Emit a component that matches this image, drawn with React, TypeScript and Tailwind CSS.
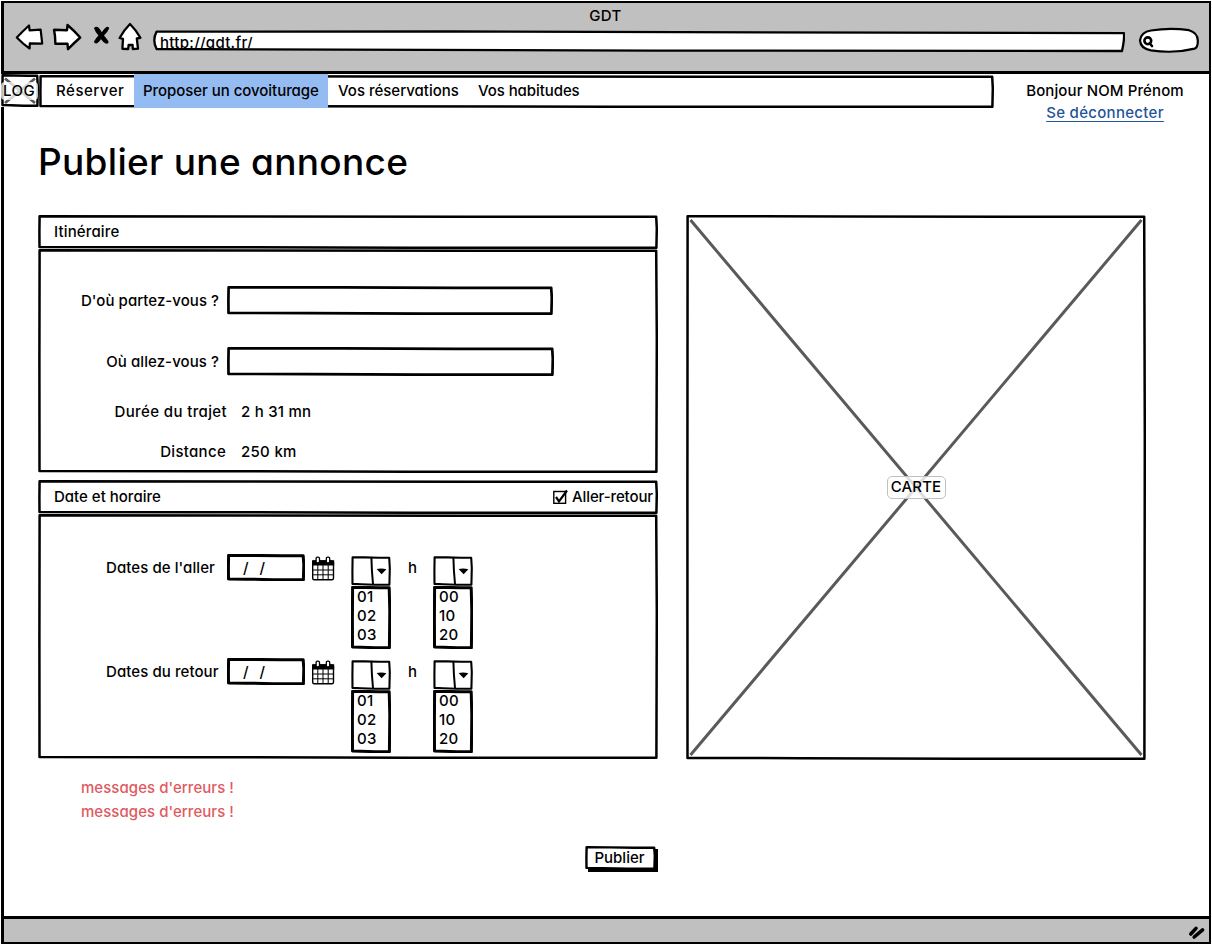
import React from "react";

const INK = "#000";

/* Hand-drawn rectangle outline, laid over the edge of its parent. */
function Outline({ w, h, stroke = 2.5 }: { w: number; h: number; stroke?: number }) {
  const d = [
    `M1.6 1.3`,
    `L${w * 0.35} 1.4`,
    `L${w * 0.7} 1.8`,
    `L${w - 1.8} 1.8`,
    `L${w - 1.2} ${h * 0.4}`,
    `L${w - 1.6} ${h - 1.3}`,
    `L${w * 0.6} ${h - 1.3}`,
    `L${w * 0.25} ${h - 1.8}`,
    `L1.5 ${h - 2.1}`,
    `L1.4 ${h * 0.5}`,
    "Z",
  ].join(" ");
  return (
    <svg className="pointer-events-none absolute left-0 top-0" width={w} height={h} viewBox={`0 0 ${w} ${h}`} fill="none" stroke={INK} strokeWidth={stroke} strokeLinejoin="round">
      <path d={d} />
    </svg>
  );
}

function BackArrow() {
  return (
    <svg width="29" height="28" viewBox="0 0 29 28" fill="#fff" stroke={INK} strokeWidth="2.2" strokeLinejoin="round">
      <path d="M1.8 14.5 Q8 8 14 2.5 L14.6 7.4 L25.6 6.6 Q26.4 13 27.2 20.6 L14.8 20.4 L14.6 25.5 Q8 21 1.8 14.5Z" />
    </svg>
  );
}

function ForwardArrow() {
  return (
    <svg width="30" height="28" viewBox="0 0 30 28" fill="#fff" stroke={INK} strokeWidth="2.4" strokeLinejoin="round">
      <path d="M2 6.8 L15 7.2 L15.5 2 Q22 7.5 28.2 14.5 Q22 20 16 26.2 L15.5 20.8 L3.4 20.8 Q3.4 13 2 6.8Z" />
    </svg>
  );
}

function StopCross() {
  return (
    <svg width="19" height="21" viewBox="0 0 19 21" fill={INK}>
      <path d="M2 3.2 Q3.6 0.8 6.4 2.4 Q8.4 4.4 9.8 7.2 Q12 3.6 14.4 2 Q17 1.2 17.2 3.6 Q15.4 7.4 12 10.6 Q14.4 13.4 16.6 16.6 Q16.8 19 14 18.8 Q11.2 17.4 9 14.2 Q6.8 17.4 4.6 18.6 Q2 18.8 2 16.6 Q3.6 13.4 6.4 10.6 Q3.4 7.2 2 3.2Z" />
    </svg>
  );
}

function Home() {
  return (
    <svg width="24" height="29" viewBox="0 0 24 29" fill="#fff" stroke={INK} strokeWidth="2.3" strokeLinejoin="round">
      <path d="M12 2 Q18 8 22.4 15.8 L18.8 16.5 L20 26.6 L14.8 27 L14.6 23 L10.6 23 L10.2 27 L4.4 26.8 L5 16.8 L1.6 16 Q6 8 12 2Z" />
    </svg>
  );
}

function Calendar() {
  return (
    <svg width="24" height="26" viewBox="0 0 24 26" fill="none" stroke={INK}>
      <rect x="1.7" y="5" width="20.8" height="18.8" rx="1.5" fill="#fff" strokeWidth="1.4" />
      <rect x="1" y="4.3" width="22.2" height="5.2" fill={INK} stroke="none" />
      <path d="M6.8 9V24M12 9V24M17.2 9V24M2 14H22.5M2 18.8H22.5" strokeWidth="1" />
      <rect x="5.1" y="1.2" width="3.4" height="5.6" rx="1.4" fill="#fff" strokeWidth="1.3" />
      <rect x="15.3" y="1.2" width="3.4" height="5.6" rx="1.4" fill="#fff" strokeWidth="1.3" />
    </svg>
  );
}

function AddressBar() {
  return (
    <div className="relative h-[23px] w-[972px] overflow-hidden">
      <svg className="absolute inset-0" width="972" height="23" viewBox="0 0 972 23" fill="#fff" stroke={INK} strokeWidth="2.3" strokeLinejoin="round">
        <path d="M3.6 1.6 L300 1.5 L971 3.2 Q971.5 10 969 21 L500 20.6 L3.6 19 Q-1 10 3.6 1.6Z" />
      </svg>
      <div className="relative h-[18px] overflow-hidden pl-[7px] text-[15px] leading-[25px] tracking-[0.02em]">http://gdt.fr/</div>
    </div>
  );
}

function SearchField() {
  return (
    <svg width="61" height="26" viewBox="0 0 61 26" fill="#fff" stroke={INK} strokeWidth="2.2">
      <path d="M13 3.5 Q32 0.4 51 3.2 Q59.6 5.6 59.8 13.5 Q60 20.6 56.6 21.6 Q36 26.8 13 23.4 Q2.4 21.4 2 13.4 Q3 5 13 3.5Z" />
      <circle cx="9.8" cy="13.8" r="3.4" strokeWidth="2.6" />
      <path d="M11.8 16.5 L14 19" strokeWidth="2.6" strokeLinecap="round" />
    </svg>
  );
}

function Combo({ options }: { options: string[] }) {
  return (
    <div className="w-10">
      <div className="relative flex h-[30px]">
        <Outline w={40} h={30} stroke={2.1} />
        <svg width="40" height="30" viewBox="0 0 40 30">
          <path d="M20.4 1.5 Q20.6 14 22 28" fill="none" stroke={INK} strokeWidth="2" />
          <path d="M25.6 13 Q30.5 12 35.4 13.2 L30.6 18.2Z" fill={INK} />
        </svg>
      </div>
      <ul className="relative h-[63px] pl-[6px] pt-px">
        <Outline w={40} h={63} stroke={3} />
        {options.map((o) => (
          <li key={o} className="text-[15px] leading-[19px] tracking-[0.02em]">{o}</li>
        ))}
      </ul>
    </div>
  );
}

function DateRow({ label }: { label: string }) {
  return (
    <div className="flex h-[104px] items-start">
      <div className="w-[121px] whitespace-nowrap text-[15px] leading-[26px] tracking-[0.005em]">{label}</div>
      <div className="relative -mt-px h-[27px] w-[78px] whitespace-pre pl-[16px] text-[15px] leading-[28px] [word-spacing:1.5px]">
        <Outline w={78} h={27} stroke={3} />
        /  /
      </div>
      <div className="ml-[6px] mt-px">
        <Calendar />
      </div>
      <div className="ml-4 mt-px">
        <Combo options={["01", "02", "03"]} />
      </div>
      <div className="w-[42px] pl-[17px] text-[15px] leading-[26px]">h</div>
      <div className="mt-px">
        <Combo options={["00", "10", "20"]} />
      </div>
    </div>
  );
}

function TextField({ w }: { w: 326 | 327 }) {
  return (
    <div className="relative ml-[8px] h-[29px]">
      <input className={w === 326 ? "block h-[29px] w-[326px] px-2 outline-none" : "block h-[29px] w-[327px] px-2 outline-none"} />
      <Outline w={w} h={29} stroke={2.7} />
    </div>
  );
}

export default function App() {
  return (
    <div className="h-[945px] w-[1212px] overflow-hidden bg-white pl-px pt-px text-black font-[450] [font-family:Inter,'Noto_Sans',sans-serif] [font-feature-settings:'cv11']">
      <div className="flex h-[943px] w-[1210px] flex-col border-y-[2px] border-l-[3px] border-r-[2px] border-black">
        <header className="h-[71px] shrink-0 border-b-[3px] border-black bg-[#c0c0c0]">
          <div className="h-[20px] pt-px pr-[2px] text-center text-[15px] leading-[23px] tracking-[0.03em]">GDT</div>
          <div className="flex h-[40px] items-start pl-[11px]">
            <BackArrow />
            <div className="ml-[8px]">
              <ForwardArrow />
            </div>
            <div className="ml-[10px] mt-[2px]">
              <StopCross />
            </div>
            <div className="ml-[7px] -mt-px">
              <Home />
            </div>
            <div className="ml-[11px] mt-[7px]">
              <AddressBar />
            </div>
            <div className="ml-[13px] mt-[4px]">
              <SearchField />
            </div>
          </div>
        </header>

        <div className="flex h-[60px] shrink-0 items-start">
          <div className="relative -ml-[3px] flex h-[33px] w-[38px] items-center justify-center bg-white">
            <Outline w={38} h={33} />
            <svg className="absolute inset-0" width="38" height="33" viewBox="0 0 38 33" stroke="#5a5a5a" strokeWidth="2.8">
              <path d="M4 4.5 L34 29 M34 4.5 L4 29" />
            </svg>
            <span className="relative -ml-[2px] w-[37px] shrink-0 rounded bg-white/75 text-center text-[15px] leading-[18px] tracking-[0.03em]">LOG</span>
          </div>
          <nav className="relative mt-px flex h-[33px] w-[955px] items-start pl-[3px] pt-[2px] text-[15px] leading-[28px]">
            <Outline w={955} h={33} />
            <a className="w-[92px] pl-[14px] tracking-[0.035em]">Réserver</a>
            <a className="relative -mt-[3px] h-[34px] w-[194px] whitespace-nowrap bg-[#94bbf2] pl-[9px] pt-[3px] tracking-[-0.003em]">Proposer un covoiturage</a>
            <a className="w-[141px] whitespace-nowrap pl-[10px]">Vos réservations</a>
            <a className="whitespace-nowrap pl-[9px] tracking-[-0.005em]">Vos habitudes</a>
          </nav>
          <div className="ml-[22px] flex w-[178px] flex-col items-center whitespace-nowrap pt-[6px] text-[15px] leading-[22px] tracking-[0.008em]">
            <span>Bonjour NOM Prénom</span>
            <a className="tracking-[0.02em] text-[#1f5599] underline underline-offset-[3px]">Se déconnecter</a>
          </div>
        </div>

        <main className="flex flex-1 flex-col pl-[34px]">
          <h1 className="h-[81px] whitespace-nowrap pt-[4px] text-[37px] font-medium leading-[48px] tracking-[0.008em]">Publier une annonce</h1>
          <div className="flex items-start">
            <div className="w-[620px]">
              <div className="relative h-[34px] pl-4 text-[15px] leading-[33px] tracking-[0.01em]">
                <Outline w={620} h={34} />
                Itinéraire
              </div>
              <section className="relative h-[224px] pt-[37px] text-[15px]">
                <Outline w={620} h={224} />
                <div className="flex h-[61px] items-start">
                  <label className="w-[181px] whitespace-nowrap text-right leading-[29px] tracking-[0.003em]">D'où partez-vous ?</label>
                  <TextField w={326} />
                </div>
                <div className="flex h-[49px] items-start">
                  <label className="w-[181px] whitespace-nowrap text-right leading-[29px] tracking-[0.005em]">Où allez-vous ?</label>
                  <TextField w={327} />
                </div>
                <div className="flex h-10 items-start leading-[32px] tracking-[0.025em]">
                  <div className="w-[189px] whitespace-nowrap text-right">Durée du trajet</div>
                  <div className="ml-[14px] tracking-[0.015em]">2 h 31 mn</div>
                </div>
                <div className="flex items-start leading-[32px] tracking-[0.02em]">
                  <div className="w-[188px] text-right">Distance</div>
                  <div className="ml-[15px]">250 km</div>
                </div>
              </section>
              <div className="relative mt-[7px] flex h-[34px] items-start pl-4 pr-[5px] text-[15px] leading-[34px]">
                <Outline w={620} h={34} />
                <span>Date et horaire</span>
                <label className="ml-auto flex items-center">
                  <svg width="17" height="16" viewBox="0 0 17 16" fill="none" stroke={INK}>
                    <rect x="2.8" y="2.5" width="11.8" height="11.8" strokeWidth="1.4" />
                    <path d="M5 8 L8 12.3 L16 1.5" strokeWidth="2.2" />
                  </svg>
                  <span className="ml-1 tracking-[-0.008em]">Aller-retour</span>
                </label>
              </div>
              <section className="relative h-[245px] pl-[68px] pt-[41px]">
                <Outline w={620} h={245} />
                <DateRow label="Dates de l'aller" />
                <DateRow label="Dates du retour" />
              </section>
            </div>
            <div className="relative ml-[28px] flex h-[545px] w-[460px] items-center justify-center">
              <Outline w={460} h={545} />
              <svg className="absolute inset-0" width="460" height="545" viewBox="0 0 460 545" stroke="#5a5a5a" strokeWidth="3">
                <path d="M4.5 5 L455.5 540 M455.5 5 L4.5 540" />
              </svg>
              <span className="relative -mt-px h-[23px] w-[59px] rounded-[5px] border border-[#c0c0c0] bg-white/80 text-center text-[15px] leading-[20px] tracking-[0.01em]">CARTE</span>
            </div>
          </div>
          <div className="mt-[16px] h-[70px] pl-[43px] text-[15px] leading-[24px] tracking-[0.003em] text-[#e05a60]">
            <p>messages d'erreurs !</p>
            <p>messages d'erreurs !</p>
          </div>
          <button className="relative ml-[547px] h-[23px] w-[70px] bg-white pr-px text-[15px] leading-[22px] shadow-[3px_3px_0_#000]">
            <Outline w={71} h={24} stroke={2.4} />
            Publier
          </button>
        </main>

        <footer className="flex h-[26px] shrink-0 items-center justify-end border-t-[3px] border-black bg-[#c0c0c0] pr-[2px]">
          <svg width="20" height="18" viewBox="0 0 20 18" stroke={INK} strokeWidth="3.6" strokeLinecap="round">
            <path d="M3.8 12 L9 6.4 M7.2 15 L15.6 7.8" />
          </svg>
        </footer>
      </div>
    </div>
  );
}
